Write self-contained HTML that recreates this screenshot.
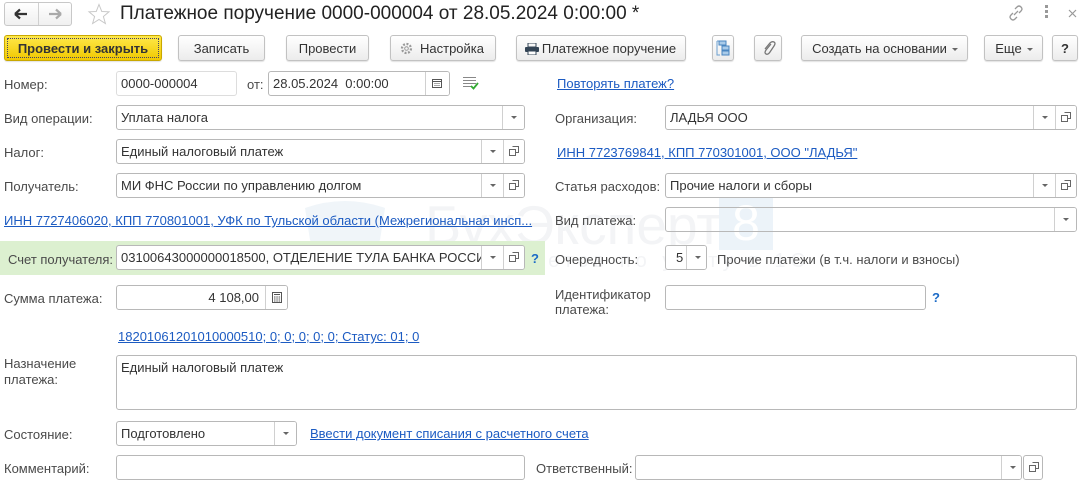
<!DOCTYPE html>
<html><head><meta charset="utf-8"><style>
*{box-sizing:border-box;margin:0;padding:0}
body{width:1083px;height:481px;background:#fff;font-family:"Liberation Sans",Arial,sans-serif;font-size:13px;color:#4a4a4a;position:relative;overflow:hidden}
.a{position:absolute;white-space:nowrap}
.f{position:absolute;height:25px;border:1px solid #b8b8b8;border-radius:3px;background:#fff;color:#333;padding:4px 0 0 4px;overflow:hidden;white-space:nowrap}
.b{position:absolute;top:0;bottom:0;width:22px;border-left:1px solid #d0d0d0;background:#fff}
.dd:after{content:"";position:absolute;left:8px;top:10px;border-left:3px solid transparent;border-right:3px solid transparent;border-top:3px solid #666}
.op svg{position:absolute;left:5px;top:6px}
.btn{position:absolute;top:35px;height:26px;border:1px solid #c2c2c2;border-radius:3px;background:linear-gradient(#fff,#ececec);box-shadow:0 1px 1px rgba(0,0,0,.12);color:#333;font-size:13px;text-align:center;padding-top:5px}
.lk{position:absolute;color:#1c5bc2;text-decoration:underline;white-space:nowrap}
.q{position:absolute;color:#1c6bc7;font-weight:bold;font-size:13px}
.wm{position:absolute;color:#f3f4f6;white-space:nowrap}
</style></head><body>
<div class="wm" style="left:425px;top:193px;font-size:55px">БухЭксперт</div>
<div class="a" style="left:719px;top:196px;width:54px;height:54px;background:#ecf3f9;color:#fff;font-size:50px;text-align:center;line-height:54px">8</div>
<div class="wm" style="left:428px;top:250px;font-size:20px;letter-spacing:5px">База ответов по учету в 1С</div>
<svg class="a" style="left:300px;top:200px" width="90" height="75"><path d="M5 8 Q45 -6 85 8 L80 40 Q70 62 45 72 Q20 62 10 40Z" fill="#f0f5f9"/></svg>

<div class="a" style="left:4px;top:2px;width:68px;height:24px;border:1px solid #c8c8c8;border-radius:3px;background:linear-gradient(#fff,#f0f0f0)"></div>
<div class="a" style="left:38px;top:3px;width:1px;height:22px;background:#d0d0d0"></div>
<svg class="a" style="left:14px;top:8px" width="14" height="12"><path d="M1 6H13M1 6L6 1.5M1 6L6 10.5" stroke="#333" stroke-width="2.2" fill="none"/></svg>
<svg class="a" style="left:48px;top:8px" width="14" height="12"><path d="M1 6H13M13 6L8 1.5M13 6L8 10.5" stroke="#aaa" stroke-width="2.2" fill="none"/></svg>
<svg class="a" style="left:87px;top:3px" width="24" height="22"><path d="M12 1.5L14.8 8.5 22 8.8 16.4 13.5 18.4 20.5 12 16.5 5.6 20.5 7.6 13.5 2 8.8 9.2 8.5Z" fill="none" stroke="#c8c8c8"/></svg>
<div class="a" style="left:120px;top:3px;font-size:19px;color:#222">Платежное поручение 0000-000004 от 28.05.2024 0:00:00 *</div>
<svg class="a" style="left:1008px;top:5px" width="16" height="16"><path d="M6 10L10 6M7 4L9 2Q11 0 13 2Q15 4 13 6L11 8M9 12L7 14Q5 16 3 14Q1 12 3 10L5 8" stroke="#999" stroke-width="1.3" fill="none"/></svg>
<div class="a" style="left:1045px;top:5px;width:3px;height:3px;background:#999;box-shadow:0 5px #999,0 10px #999"></div>
<svg class="a" style="left:1068px;top:9px" width="9" height="9"><path d="M1 1L8 8M8 1L1 8" stroke="#999" stroke-width="1.2"/></svg>

<div class="btn" style="left:4px;width:158px;background:linear-gradient(#ffe94a,#f0c800);border-color:#c9a800;font-weight:bold;color:#333;outline:1px dotted #446;outline-offset:-4px">Провести и закрыть</div>
<div class="btn" style="left:178px;width:87px">Записать</div>
<div class="btn" style="left:286px;width:83px">Провести</div>
<div class="btn" style="left:390px;width:106px;padding-left:18px">Настройка<svg class="a" style="left:9px;top:6px" width="13" height="13"><circle cx="6.5" cy="6.5" r="4.5" fill="none" stroke="#999" stroke-width="2.2" stroke-dasharray="2 1.5"/><circle cx="6.5" cy="6.5" r="1.8" fill="none" stroke="#999"/></svg></div>
<div class="btn" style="left:516px;width:170px;padding-left:16px">Платежное поручение<svg class="a" style="left:8px;top:7px" width="14" height="12"><rect x="3" y="0" width="8" height="4" fill="none" stroke="#345" /><rect x="0" y="4" width="14" height="5" rx="1" fill="#345"/><rect x="3" y="8" width="8" height="4" fill="#fff" stroke="#345"/></svg></div>
<div class="btn" style="left:712px;width:22px"><svg class="a" style="left:3px;top:4px" width="15" height="16"><path d="M1 1H4M1 1V15H4" stroke="#6a9fd0" fill="none"/><rect x="3" y="1" width="7" height="4" fill="#a9cbe9" stroke="#4a86c0"/><rect x="6" y="6" width="7" height="4" fill="#a9cbe9" stroke="#4a86c0"/><rect x="6" y="11" width="7" height="4" fill="#a9cbe9" stroke="#4a86c0"/></svg></div>
<div class="btn" style="left:754px;width:28px"><svg class="a" style="left:7px;top:4px" width="14" height="16"><path d="M9 4L4 10Q2 13 4 14Q6 15 8 12L12 6Q14 3 12 2Q10 1 8 3L3 9" stroke="#777" stroke-width="1.3" fill="none"/></svg></div>
<div class="btn" style="left:801px;width:167px;padding-right:10px">Создать на основании<span style="position:absolute;right:9px;top:12px;border-left:3px solid transparent;border-right:3px solid transparent;border-top:3px solid #666"></span></div>
<div class="btn" style="left:984px;width:59px;padding-right:10px">Еще<span style="position:absolute;right:9px;top:12px;border-left:3px solid transparent;border-right:3px solid transparent;border-top:3px solid #666"></span></div>
<div class="btn" style="left:1052px;width:26px;font-weight:bold">?</div>

<div class="a" style="left:4px;top:77px">Номер:</div>
<div class="f" style="left:116px;top:71px;width:121px;border-color:#ddd">0000-000004</div>
<div class="a" style="left:247px;top:77px">от:</div>
<div class="f" style="left:268px;top:71px;width:182px">28.05.2024&nbsp; 0:00:00<div class="b" style="right:0;width:24px"><svg style="position:absolute;left:6px;top:6px" width="10" height="10"><rect x=".5" y="1.5" width="9" height="8" fill="none" stroke="#555"/><path d="M1 3.5H9M2.5 5.5h1M4.5 5.5h1M6.5 5.5h1M2.5 7.5h1M4.5 7.5h1M6.5 7.5h1" stroke="#555"/></svg></div></div>
<svg class="a" style="left:462px;top:76px" width="18" height="14"><path d="M1 1.5H14M1 4.5H14M1 7.5H14M1 10.5H9" stroke="#888"/><path d="M9 10L11.5 12.5 16 7" stroke="#3a3" stroke-width="1.8" fill="none"/></svg>
<div class="lk" style="left:557px;top:76px">Повторять платеж?</div>

<div class="a" style="left:4px;top:111px">Вид операции:</div>
<div class="f" style="left:116px;top:105px;width:409px">Уплата налога<div class="b dd" style="right:0"></div></div>
<div class="a" style="left:555px;top:111px">Организация:</div>
<div class="f" style="left:665px;top:105px;width:412px">ЛАДЬЯ ООО<div class="b dd" style="right:21px"></div><div class="b op" style="right:0;width:21px"><svg width="10" height="10"><path d="M3.5 .5H9.5V6.5H6.5M.5 3.5H6.5V9.5H.5Z" fill="none" stroke="#666"/></svg></div></div>

<div class="a" style="left:4px;top:145px">Налог:</div>
<div class="f" style="left:116px;top:139px;width:409px">Единый налоговый платеж<div class="b dd" style="right:21px"></div><div class="b op" style="right:0;width:21px"><svg width="10" height="10"><path d="M3.5 .5H9.5V6.5H6.5M.5 3.5H6.5V9.5H.5Z" fill="none" stroke="#666"/></svg></div></div>
<div class="lk" style="left:557px;top:145px">ИНН 7723769841, КПП 770301001, ООО "ЛАДЬЯ"</div>

<div class="a" style="left:4px;top:179px">Получатель:</div>
<div class="f" style="left:116px;top:173px;width:409px">МИ ФНС России по управлению долгом<div class="b dd" style="right:21px"></div><div class="b op" style="right:0;width:21px"><svg width="10" height="10"><path d="M3.5 .5H9.5V6.5H6.5M.5 3.5H6.5V9.5H.5Z" fill="none" stroke="#666"/></svg></div></div>
<div class="a" style="left:555px;top:179px">Статья расходов:</div>
<div class="f" style="left:665px;top:173px;width:412px">Прочие налоги и сборы<div class="b dd" style="right:21px"></div><div class="b op" style="right:0;width:21px"><svg width="10" height="10"><path d="M3.5 .5H9.5V6.5H6.5M.5 3.5H6.5V9.5H.5Z" fill="none" stroke="#666"/></svg></div></div>

<div class="lk" style="left:4px;top:213px">ИНН 7727406020, КПП 770801001, УФК по Тульской области (Межрегиональная инсп...</div>
<div class="a" style="left:555px;top:213px">Вид платежа:</div>
<div class="f" style="left:665px;top:207px;width:412px;background:transparent"><div class="b dd" style="right:0"></div></div>

<div class="a" style="left:0;top:241px;width:545px;height:34px;background:#dcf0d0"></div>
<div class="a" style="left:8px;top:252px">Счет получателя:</div>
<div class="f" style="left:116px;top:245px;width:409px">03100643000000018500, ОТДЕЛЕНИЕ ТУЛА БАНКА РОССИ<div class="b dd" style="right:21px"></div><div class="b op" style="right:0;width:21px"><svg width="10" height="10"><path d="M3.5 .5H9.5V6.5H6.5M.5 3.5H6.5V9.5H.5Z" fill="none" stroke="#666"/></svg></div></div>
<div class="q" style="left:531px;top:251px">?</div>
<div class="a" style="left:555px;top:252px">Очередность:</div>
<div class="f" style="left:665px;top:245px;width:42px;padding-left:10px">5<div class="b dd" style="right:0;width:20px"></div></div>
<div class="a" style="left:717px;top:252px">Прочие платежи (в т.ч. налоги и взносы)</div>

<div class="a" style="left:4px;top:291px">Сумма платежа:</div>
<div class="f" style="left:116px;top:285px;width:172px;text-align:right;padding-right:28px">4 108,00<div class="b" style="right:0"><svg style="position:absolute;left:6px;top:6px" width="10" height="11"><rect x=".5" y=".5" width="9" height="10" fill="none" stroke="#555"/><path d="M2 2.5H8M2 5h1.5M4.3 5h1.5M6.6 5h1.5M2 7h1.5M4.3 7h1.5M6.6 7h1.5M2 9h1.5M4.3 9h1.5M6.6 9h1.5" stroke="#555"/></svg></div></div>
<div class="a" style="left:555px;top:287px;line-height:15px">Идентификатор<br>платежа:</div>
<div class="f" style="left:665px;top:285px;width:261px"></div>
<div class="q" style="left:932px;top:290px">?</div>

<div class="lk" style="left:118px;top:329px">18201061201010000510; 0; 0; 0; 0; 0; Статус: 01; 0</div>

<div class="a" style="left:4px;top:356px;line-height:16px">Назначение<br>платежа:</div>
<div class="f" style="left:116px;top:355px;width:961px;height:55px">Единый налоговый платеж</div>

<div class="a" style="left:4px;top:427px">Состояние:</div>
<div class="f" style="left:116px;top:421px;width:181px">Подготовлено<div class="b dd" style="right:0"></div></div>
<div class="lk" style="left:310px;top:426px">Ввести документ списания с расчетного счета</div>

<div class="a" style="left:4px;top:461px">Комментарий:</div>
<div class="f" style="left:116px;top:455px;width:409px"></div>
<div class="a" style="left:536px;top:461px">Ответственный:</div>
<div class="f" style="left:635px;top:455px;width:387px"><div class="b dd" style="right:0;width:20px"></div></div>
<div class="a op" style="left:1023px;top:455px;width:20px;height:25px;border:1px solid #b8b8b8;border-radius:3px"><svg width="10" height="10"><path d="M3.5 .5H9.5V6.5H6.5M.5 3.5H6.5V9.5H.5Z" fill="none" stroke="#666"/></svg></div>
</body></html>
